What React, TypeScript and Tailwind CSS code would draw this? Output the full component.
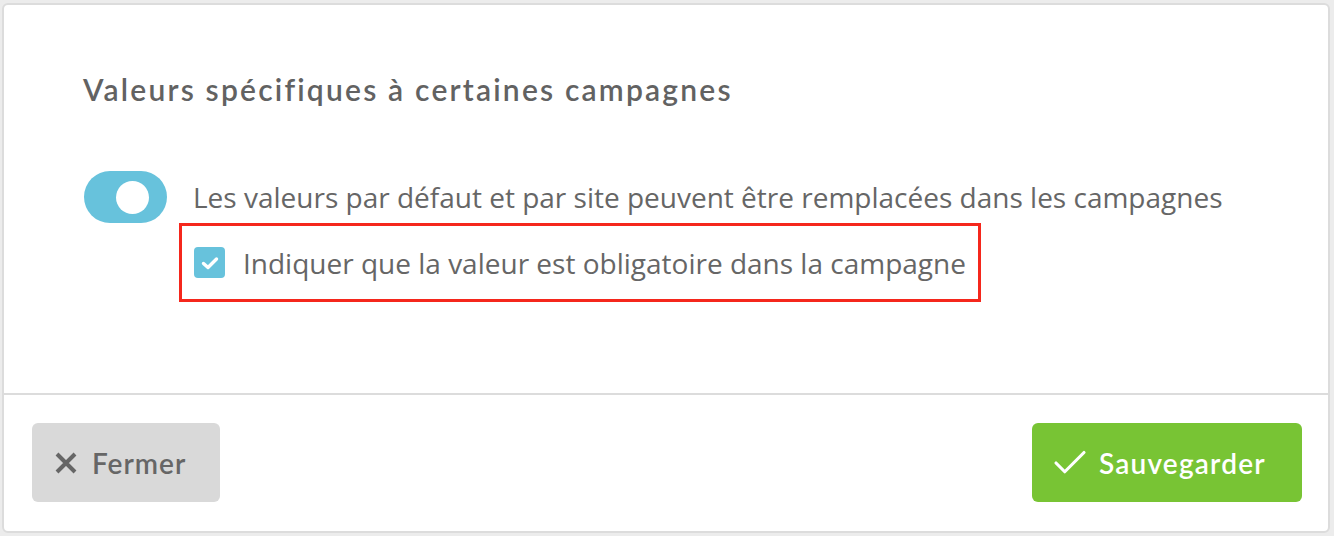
import { Check } from "lucide-react";

function Toggle({ on }: { on: boolean }) {
  return (
    <div
      className={`flex h-[52px] w-[83px] shrink-0 items-center rounded-full px-[18px] ${
        on ? "justify-end bg-[#67c2dc]" : "justify-start bg-[#d9d9d9]"
      }`}
    >
      <div className="h-[33px] w-[33px] rounded-full bg-white" />
    </div>
  );
}

function CheckBox() {
  return (
    <div className="flex h-[31px] w-[31px] shrink-0 items-center justify-center rounded-[4px] bg-[#67c2dc]">
      <svg width="18" height="14" viewBox="0 0 18 14" fill="none">
        <path
          d="M2.5 7.5 L7 11.5 L15.5 3"
          stroke="white"
          strokeWidth="3.4"
          strokeLinecap="round"
          strokeLinejoin="round"
        />
      </svg>
    </div>
  );
}

function CloseIcon() {
  return (
    <svg width="22" height="22" viewBox="0 0 22 22" fill="none" className="shrink-0">
      <path d="M2 2 L20 20 M20 2 L2 20" stroke="currentColor" strokeWidth="4" />
    </svg>
  );
}

export default function App() {
  return (
    <div className="h-[536px] w-[1334px] bg-[#ececec] pl-[2px] pt-[3px] font-['Lato',sans-serif]">
      <div className="flex h-[530px] w-[1328px] flex-col rounded-[6px] border-2 border-[#dcdcdc] bg-white">
        <div className="flex flex-1 flex-col pl-[79px] pt-[64px]">
          <h2 className="text-[30px] leading-[40px] font-semibold tracking-[2.2px] text-[#626262]">
            Valeurs spécifiques à certaines campagnes
          </h2>

          <div className="mt-[62px] flex items-center gap-[26px] pl-[1px]">
            <Toggle on />
            <span className="font-['Open_Sans',sans-serif] text-[28px] leading-[38px] text-[#666666]">
              Les valeurs par défaut et par site peuvent être remplacées dans les campagnes
            </span>
          </div>

          <div className="ml-[96px] flex h-[79px] w-[802px] items-center gap-[18px] border-[3px] border-[#f5271c] pl-[12px]">
            <CheckBox />
            <span className="font-['Open_Sans',sans-serif] text-[28px] leading-[38px] text-[#666666]">
              Indiquer que la valeur est obligatoire dans la campagne
            </span>
          </div>
        </div>

        <div className="flex h-[138px] items-start justify-between border-t-2 border-[#dcdcdc] pl-[28px] pr-[26px] pt-[28px]">
          <button className="flex h-[79px] w-[188px] items-center gap-[15px] rounded-[6px] bg-[#d9d9d9] pl-[23px] text-[28px] font-semibold tracking-[1px] text-[#666666]">
            <CloseIcon />
            Fermer
          </button>
          <button className="flex h-[79px] w-[270px] items-center gap-[8px] rounded-[6px] bg-[#78c434] pl-[17px] text-[28px] font-semibold tracking-[1.2px] text-white">
            <Check size={42} strokeWidth={1.8} />
            Sauvegarder
          </button>
        </div>
      </div>
    </div>
  );
}
